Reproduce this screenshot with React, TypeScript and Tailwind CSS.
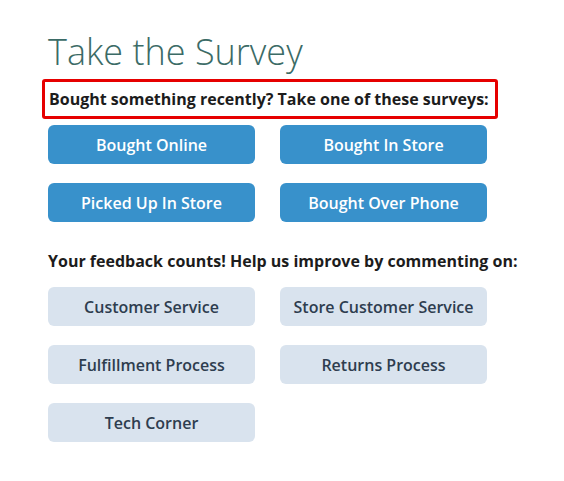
import React from "react";

const surveys = ["Bought Online", "Bought In Store", "Picked Up In Store", "Bought Over Phone"];
const feedback = ["Customer Service", "Store Customer Service", "Fulfillment Process", "Returns Process", "Tech Corner"];

const App: React.FC = () => {
  return (
    <div className="min-h-screen bg-white pl-12 pt-[34px] font-['Open_Sans',sans-serif]">
      <h1 className="text-[36px] leading-[36px] font-light text-[#3b6b66]">Take the Survey</h1>

      {/* highlighted prompt */}
      <div className="mt-[9px] -ml-[6px] w-[456px] h-[40px] border-[3px] border-[#e60000] rounded-[3px] flex items-center pl-[4px]">
        <p className="text-[16px] font-bold text-[#1c1c1c]">Bought something recently? Take one of these surveys:</p>
      </div>

      <div className="mt-[6px] grid grid-cols-[207px_207px] gap-x-[25px] gap-y-[19px]">
        {surveys.map((s) => (
          <button
            key={s}
            className="h-[39px] rounded-[6px] bg-[#3891cb] text-white text-[16px] font-semibold"
          >
            {s}
          </button>
        ))}
      </div>

      <p className="mt-[27px] text-[16px] leading-6 font-bold text-[#1c1c1c]">
        Your feedback counts! Help us improve by commenting on:
      </p>

      <div className="mt-[14px] grid grid-cols-[207px_207px] gap-x-[25px] gap-y-[19px]">
        {feedback.map((f) => (
          <button
            key={f}
            className="h-[39px] rounded-[6px] bg-[#d9e3ee] text-[#2e3d4f] text-[16px] font-semibold"
          >
            {f}
          </button>
        ))}
      </div>
    </div>
  );
};

export default App;
